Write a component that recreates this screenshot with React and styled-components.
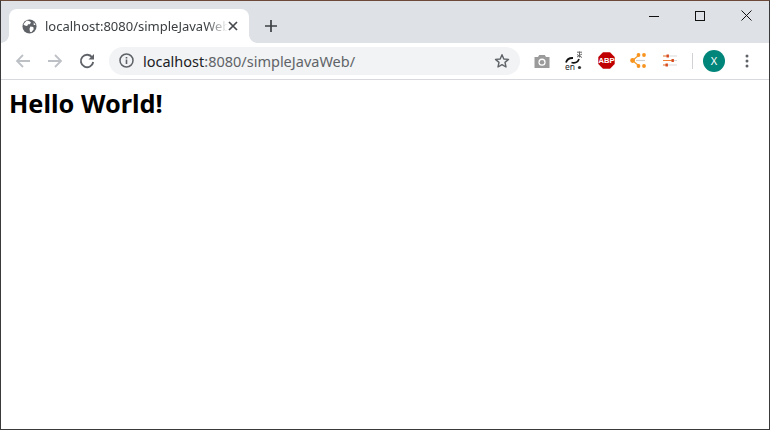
import React from 'react';
import styled, { createGlobalStyle } from 'styled-components';

const Global = createGlobalStyle`
  html, body { margin: 0; padding: 0; background: #fff; }
  #root { width: 770px; height: 430px; }
`;

const Win = styled.div`
  box-sizing: border-box;
  width: 770px;
  height: 430px;
  display: flex;
  flex-direction: column;
  overflow: hidden;
  background: #fff;
  border: 1px solid #3a3a3a;
  border-top-color: #6b4a3a;
  font-family: "Noto Sans", "Open Sans", sans-serif;
`;

const TabStrip = styled.div`
  height: 42px;
  flex: none;
  display: flex;
  align-items: flex-end;
  padding-left: 8px;
  background: #dee1e6;
`;

const Tab = styled.div`
  position: relative;
  box-sizing: border-box;
  width: 240px;
  height: 34px;
  display: flex;
  align-items: center;
  padding: 0 11px 0 13px;
  background: #fff;
  border-radius: 8px 8px 0 0;
  &::before, &::after {
    content: "";
    position: absolute;
    bottom: 0;
    width: 8px;
    height: 8px;
  }
  &::before { left: -8px; background: radial-gradient(circle at 0 0, #dee1e6 7.5px, #fff 8px); }
  &::after { right: -8px; background: radial-gradient(circle at 100% 0, #dee1e6 7.5px, #fff 8px); }
`;

const TabTitle = styled.span`
  flex: 1;
  margin-left: 8px;
  overflow: hidden;
  white-space: nowrap;
  font-size: 13px;
  color: #3c4043;
  -webkit-mask-image: linear-gradient(to right, #000 88%, transparent 100%);
  mask-image: linear-gradient(to right, #000 88%, transparent 100%);
`;

const NewTab = styled.div`
  width: 28px;
  height: 28px;
  margin: 0 0 3px 8px;
  display: flex;
  align-items: center;
  justify-content: center;
`;

const WinControls = styled.div`
  margin-left: auto;
  align-self: flex-start;
  display: flex;
`;

const WinBtn = styled.div`
  width: 46px;
  height: 29px;
  display: flex;
  align-items: center;
  justify-content: center;
`;

const Toolbar = styled.div`
  box-sizing: border-box;
  height: 37px;
  flex: none;
  display: flex;
  align-items: center;
  padding: 0 0 1px 8px;
  background: #fff;
  border-bottom: 1px solid #d8d9dc;
`;

const NavBtn = styled.div`
  width: 28px;
  height: 28px;
  margin-right: 4px;
  display: flex;
  align-items: center;
  justify-content: center;
`;

const Omnibox = styled.div`
  box-sizing: border-box;
  width: 411px;
  height: 28px;
  margin-left: 4px;
  display: flex;
  align-items: center;
  padding: 0 10px 0 10px;
  border-radius: 14px;
  background: #f1f3f4;
`;

const Url = styled.span`
  flex: 1;
  margin-left: 9px;
  font-size: 14.5px;
  color: #5f6368;
  white-space: nowrap;
`;

const Host = styled.span`
  color: #202124;
`;

const Extensions = styled.div`
  display: flex;
  align-items: center;
  margin-left: 6px;
`;

const ExtBtn = styled.div`
  width: 32px;
  height: 28px;
  display: flex;
  align-items: center;
  justify-content: center;
`;

const MenuBtn = styled(ExtBtn)`
  margin-left: 6px;
`;

const Sep = styled.div`
  width: 1px;
  height: 16px;
  margin: 0 10px 0 6px;
  background: #d0d2d5;
`;

const Avatar = styled.div`
  width: 22px;
  height: 22px;
  border-radius: 50%;
  background: #00857a;
  color: #fff;
  font-size: 11px;
  display: flex;
  align-items: center;
  justify-content: center;
`;

const Page = styled.main`
  flex: 1;
  padding: 8px;
  background: #fff;
`;

const Heading = styled.h1`
  margin: 0;
  font-size: 25.3px;
  line-height: 30px;
  font-weight: 700;
  color: #000;
`;

export default function App() {
  return (
    <Win>
      <Global />
      <TabStrip>
        <Tab>
          <svg width="15" height="15" viewBox="0 0 16 16">
            <circle cx="8" cy="8" r="7.5" fill="#5f6368" />
            <path d="M5 1.5 L7.5 2 L9.5 3.5 L8.5 5.5 L6.5 5.5 L5.5 7.5 L3 7 L1.5 5.5 Z M9 8 L12 8.5 L12.5 11 L10 14 L8.5 13.5 L8 10.5 Z M12.5 3.5 L14.5 6.5 L12.5 6.5 Z" fill="#fff" />
          </svg>
          <TabTitle>localhost:8080/simpleJavaWeb/</TabTitle>
          <svg width="10" height="10" viewBox="0 0 10 10">
            <path d="M1 1 L9 9 M9 1 L1 9" stroke="#45484c" strokeWidth="1.7" fill="none" />
          </svg>
        </Tab>
        <NewTab>
          <svg width="12" height="12" viewBox="0 0 12 12">
            <path d="M6 0 V12 M0 6 H12" stroke="#3c4043" strokeWidth="1.7" fill="none" />
          </svg>
        </NewTab>
        <WinControls>
          <WinBtn>
            <svg width="10" height="10" viewBox="0 0 10 10"><path d="M0 5.5 H10" stroke="#111" fill="none" /></svg>
          </WinBtn>
          <WinBtn>
            <svg width="10" height="10" viewBox="0 0 10 10"><rect x="0.5" y="0.5" width="9" height="9" stroke="#111" fill="none" /></svg>
          </WinBtn>
          <WinBtn>
            <svg width="11" height="11" viewBox="0 0 11 11"><path d="M0.5 0.5 L10.5 10.5 M10.5 0.5 L0.5 10.5" stroke="#111" fill="none" /></svg>
          </WinBtn>
        </WinControls>
      </TabStrip>
      <Toolbar>
        <NavBtn>
          <svg width="16" height="16" viewBox="0 0 16 16"><path d="M15 8 H2 M8 2 L2 8 L8 14" stroke="#bdc1c6" strokeWidth="1.8" fill="none" /></svg>
        </NavBtn>
        <NavBtn>
          <svg width="16" height="16" viewBox="0 0 16 16"><path d="M1 8 H14 M8 2 L14 8 L8 14" stroke="#bdc1c6" strokeWidth="1.8" fill="none" /></svg>
        </NavBtn>
        <NavBtn>
          <svg width="16" height="16" viewBox="0 0 16 16">
            <path d="M13.2 4.5 A6.2 6.2 0 1 0 14.2 9" stroke="#5f6368" strokeWidth="1.9" fill="none" />
            <path d="M15 1 V6.5 H9.5 Z" fill="#5f6368" />
          </svg>
        </NavBtn>
        <Omnibox>
          <svg width="15" height="15" viewBox="0 0 15 15">
            <circle cx="7.5" cy="7.5" r="6.5" stroke="#5f6368" strokeWidth="1.5" fill="none" />
            <path d="M7.5 6.5 V11 M7.5 4 V5.5" stroke="#5f6368" strokeWidth="1.6" fill="none" />
          </svg>
          <Url><Host>localhost</Host>:8080/simpleJavaWeb/</Url>
          <svg width="16" height="16" viewBox="0 0 16 16">
            <path d="M8 1.7 L9.8 6 L14.5 6.4 L11 9.4 L12 14 L8 11.6 L4 14 L5 9.4 L1.5 6.4 L6.2 6 Z" stroke="#5f6368" strokeWidth="1.4" strokeLinejoin="round" fill="none" />
          </svg>
        </Omnibox>
        <Extensions>
          <ExtBtn>
            <svg width="16" height="14" viewBox="0 0 16 14">
              <path d="M0.5 3 H4 L5.2 1 H10.8 L12 3 H15.5 V14 H0.5 Z" fill="#9b9b9b" />
              <circle cx="8" cy="8.2" r="3.6" fill="#fff" />
              <circle cx="8" cy="8.2" r="2.3" fill="#9b9b9b" />
            </svg>
          </ExtBtn>
          <ExtBtn>
            <svg width="18" height="20" viewBox="0 0 18 20">
              <path d="M1 11.5 C2 8 4.5 6.8 8 7 M6.5 11.5 C10 12.5 13 11 14 8" stroke="#111" strokeWidth="1.8" fill="none" />
              <path d="M12 1.2 h5 M14.5 0.5 v6 M12 6 l5 -3 M12 3.5 l5 3" stroke="#666" strokeWidth="1" fill="none" />
              <circle cx="14.5" cy="16.5" r="1.6" fill="#333" />
              <text x="0" y="18.5" fontSize="8.5" fontFamily="Noto Sans" fill="#222">en</text>
            </svg>
          </ExtBtn>
          <ExtBtn>
            <svg width="17" height="17" viewBox="0 0 17 17">
              <path d="M5 0.3 H12 L16.7 5 V12 L12 16.7 H5 L0.3 12 V5 Z" fill="#c00000" />
              <text x="8.5" y="11.4" textAnchor="middle" fontSize="7.6" fontWeight="700" fontFamily="Liberation Sans" fill="#fff">ABP</text>
            </svg>
          </ExtBtn>
          <ExtBtn>
            <svg width="16" height="15" viewBox="0 0 16 15">
              <path d="M2.5 7.5 L8.5 2.5 M2.5 7.5 L8.5 12.5" stroke="#f5a030" strokeWidth="1.3" fill="none" />
              <path d="M6 7.5 H15" stroke="#cfcfcf" strokeWidth="1.2" fill="none" />
              <circle cx="2.6" cy="7.5" r="2.4" fill="#f7931e" />
              <circle cx="8.5" cy="2" r="1.9" fill="#f7931e" />
              <circle cx="14" cy="2" r="1.9" fill="#f7931e" />
              <circle cx="8.5" cy="13" r="1.9" fill="#f7931e" />
              <circle cx="14" cy="13" r="1.9" fill="#f7931e" />
            </svg>
          </ExtBtn>
          <ExtBtn>
            <svg width="14" height="13" viewBox="0 0 14 13">
              <path d="M0 2 H14 M0 6.5 H14 M0 11 H14" stroke="#d9d9d9" strokeWidth="1.2" fill="none" />
              <path d="M0 2 H5 M0 6.5 H10 M0 11 H4" stroke="#f08030" strokeWidth="1.2" fill="none" />
              <rect x="3.5" y="0.5" width="2.4" height="3" fill="#d84b20" />
              <rect x="8.5" y="5" width="2.4" height="3" fill="#d84b20" />
              <rect x="2.5" y="9.5" width="2.4" height="3" fill="#d84b20" />
            </svg>
          </ExtBtn>
          <Sep />
          <Avatar>X</Avatar>
          <MenuBtn>
            <svg width="4" height="14" viewBox="0 0 4 14">
              <circle cx="2" cy="2" r="1.5" fill="#5f6368" />
              <circle cx="2" cy="7" r="1.5" fill="#5f6368" />
              <circle cx="2" cy="12" r="1.5" fill="#5f6368" />
            </svg>
          </MenuBtn>
        </Extensions>
      </Toolbar>
      <Page>
        <Heading>Hello World!</Heading>
      </Page>
    </Win>
  );
}
